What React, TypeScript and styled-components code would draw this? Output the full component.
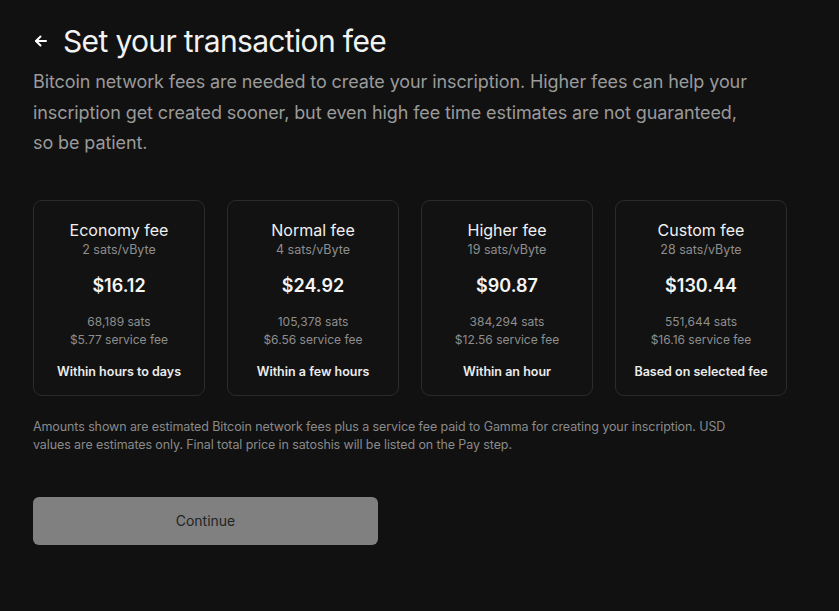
import React from "react";
import styled, { createGlobalStyle } from "styled-components";

const Global = createGlobalStyle`
  html, body { margin: 0; padding: 0; background: #111111; }
  body { font-family: Inter, "Noto Sans", sans-serif; color: #fff; }
`;

const Page = styled.div`
  min-height: 611px;
  background: #111111;
  padding: 21px 33px 0 33px;
  box-sizing: border-box;
`;

const TitleRow = styled.div`
  display: flex;
  align-items: center;
  gap: 14px;
  height: 40px;
`;

const Back = styled.button`
  background: none;
  border: none;
  padding: 0;
  display: flex;
  color: #fff;
  cursor: pointer;
`;

const Title = styled.h1`
  margin: 0;
  font-size: 30px;
  font-weight: 400;
  color: #f2f2f2;
  letter-spacing: -0.65px;
`;

const Intro = styled.p`
  margin: 6px 0 0 0;
  font-size: 18px;
  letter-spacing: -0.1px;
  line-height: 30.5px;
  color: #9a9a9a;
  max-width: 716px;
`;

const Cards = styled.div`
  display: grid;
  grid-template-columns: repeat(4, 172px);
  gap: 22px;
  margin-top: 41px;
`;

const Card = styled.div`
  height: 196px;
  box-sizing: border-box;
  border: 1px solid #2b2b2b;
  border-radius: 9px;
  background: #121212;
  display: flex;
  flex-direction: column;
  align-items: center;
  padding-top: 18px;
`;

const CardTitle = styled.div`
  font-size: 16px;
  color: #f0f0f0;
  line-height: 22px;
`;

const Rate = styled.div`
  font-size: 12.5px;
  color: #8e8e8e;
  line-height: 18px;
`;

const Price = styled.div`
  font-size: 18px;
  font-weight: 600;
  color: #f4f4f4;
  margin-top: 14px;
  line-height: 26px;
`;

const Detail = styled.div`
  font-size: 12px;
  color: #8e8e8e;
  line-height: 18px;
`;

const Details = styled.div`
  margin-top: 14px;
  display: flex;
  flex-direction: column;
  align-items: center;
`;

const Eta = styled.div`
  margin-top: 14px;
  font-size: 12.5px;
  font-weight: 600;
  color: #ececec;
  line-height: 18px;
`;

const Note = styled.p`
  margin: 22px 0 0 0;
  font-size: 12.5px;
  letter-spacing: -0.1px;
  line-height: 18.5px;
  color: #8a8a8a;
  max-width: 700px;
`;

const ContinueButton = styled.button`
  margin-top: 42px;
  width: 345px;
  height: 48px;
  border: none;
  border-radius: 6px;
  background: #808080;
  color: #242424;
  font-family: Inter, "Noto Sans", sans-serif;
  font-size: 14px;
  cursor: not-allowed;
`;

const fees = [
  { title: "Economy fee", rate: "2 sats/vByte", price: "$16.12", sats: "68,189 sats", service: "$5.77 service fee", eta: "Within hours to days" },
  { title: "Normal fee", rate: "4 sats/vByte", price: "$24.92", sats: "105,378 sats", service: "$6.56 service fee", eta: "Within a few hours" },
  { title: "Higher fee", rate: "19 sats/vByte", price: "$90.87", sats: "384,294 sats", service: "$12.56 service fee", eta: "Within an hour" },
  { title: "Custom fee", rate: "28 sats/vByte", price: "$130.44", sats: "551,644 sats", service: "$16.16 service fee", eta: "Based on selected fee" },
];

export default function App() {
  return (
    <>
      <Global />
      <Page>
        <TitleRow>
          <Back aria-label="Back">
            <svg width="16" height="16" viewBox="0 0 16 16" fill="none" stroke="#fff" strokeWidth="2" strokeLinecap="round" strokeLinejoin="round">
              <path d="M13 8H3" />
              <path d="M7.5 3.5L3 8l4.5 4.5" />
            </svg>
          </Back>
          <Title>Set your transaction fee</Title>
        </TitleRow>
        <Intro>
          Bitcoin network fees are needed to create your inscription. Higher fees can help your inscription get created sooner, but even high fee time estimates are not guaranteed, so be patient.
        </Intro>
        <Cards>
          {fees.map((f) => (
            <Card key={f.title}>
              <CardTitle>{f.title}</CardTitle>
              <Rate>{f.rate}</Rate>
              <Price>{f.price}</Price>
              <Details>
                <Detail>{f.sats}</Detail>
                <Detail>{f.service}</Detail>
              </Details>
              <Eta>{f.eta}</Eta>
            </Card>
          ))}
        </Cards>
        <Note>
          Amounts shown are estimated Bitcoin network fees plus a service fee paid to Gamma for creating your inscription. USD values are estimates only. Final total price in satoshis will be listed on the Pay step.
        </Note>
        <ContinueButton>Continue</ContinueButton>
      </Page>
    </>
  );
}
